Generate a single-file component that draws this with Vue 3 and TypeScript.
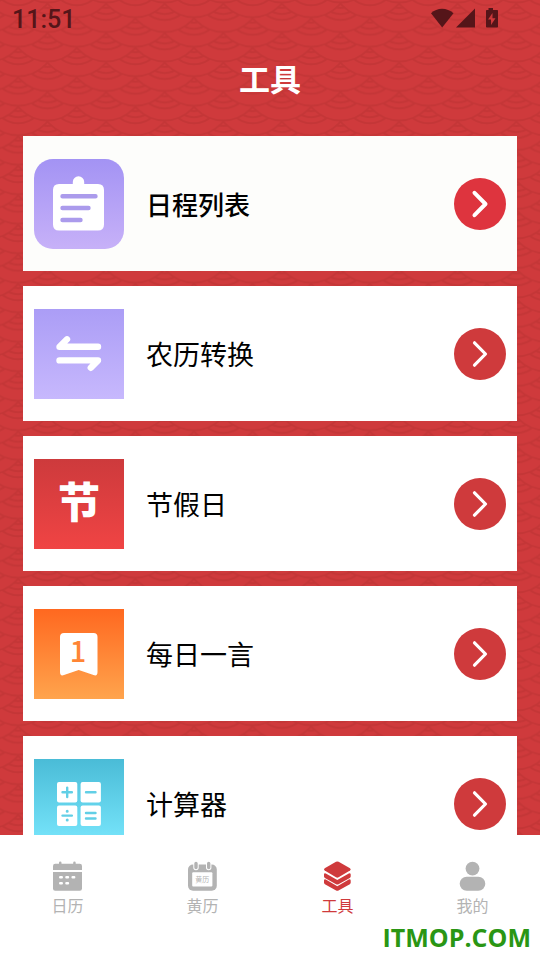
<script setup lang="ts">
type ToolKind = 'schedule' | 'convert' | 'holiday' | 'quote' | 'calculator'
type TabKind = 'calendar' | 'almanac' | 'tools' | 'mine'

interface Tool {
  kind: ToolKind
  label: string
}

interface Tab {
  kind: TabKind
  label: string
}

const tools: Tool[] = [
  { kind: 'schedule', label: '日程列表' },
  { kind: 'convert', label: '农历转换' },
  { kind: 'holiday', label: '节假日' },
  { kind: 'quote', label: '每日一言' },
  { kind: 'calculator', label: '计算器' },
]

const tabs: Tab[] = [
  { kind: 'calendar', label: '日历' },
  { kind: 'almanac', label: '黄历' },
  { kind: 'tools', label: '工具' },
  { kind: 'mine', label: '我的' },
]

const activeTab: TabKind = 'tools'

// Concentric arcs of one scale; rows are painted bottom to top so upper scales overlap lower ones.
const radii = [38, 26, 20, 14]
const even = [0, 58.6]
const odd = [-29.3, 29.3, 87.9]
const rows = [
  { y: 34.25, xs: even },
  { y: 19.5, xs: odd },
  { y: 4.75, xs: even },
  { y: -10, xs: odd },
  { y: -24.75, xs: even },
]
const scales = rows.flatMap(({ y, xs }) => xs.map((x) => ({ x, y })))
</script>

<template>
  <div class="screen">
    <svg class="waves" aria-hidden="true">
      <defs>
        <pattern id="waves" width="58.6" height="29.5" patternUnits="userSpaceOnUse" patternTransform="translate(18.2 4)">
          <g v-for="(s, i) in scales" :key="i" fill="#cf3a3c" stroke="#c43637" stroke-width="1.9">
            <circle v-for="r in radii" :key="r" :cx="s.x" :cy="s.y" :r="r" />
          </g>
        </pattern>
      </defs>
      <rect width="100%" height="100%" fill="url(#waves)" />
    </svg>

    <div class="status">
      <span class="clock">11:51</span>
      <svg class="signals" viewBox="0 0 68 20" aria-hidden="true">
        <path d="M1 5.200C7-.9 17-.9 23.500 5.200L12.200 19.500z" />
        <path d="M45 .500v19h-19z" />
        <path
          fill-rule="evenodd"
          d="M58.500 0h4.500v2h4.200q.8 0 .8.800v16q0 .700-.8.700h-10.400q-.8 0-.8-.7v-16q0-.8.800-.8h1.700zM62.500 5l-4.500 6.500h3v5.500l4.500-6.700h-3z"
        />
      </svg>
    </div>

    <header class="header">
      <h1>工具</h1>
    </header>

    <main class="list">
      <button v-for="tool in tools" :key="tool.kind" type="button" class="card" :class="tool.kind">
        <span class="tile">
          <svg viewBox="0 0 90 90" aria-hidden="true">
            <g v-if="tool.kind === 'schedule'">
              <path fill="#fff" d="M25 25h13.800v-2a5.700 5.700 0 0 1 11.400 0v2h13.800q6 0 6 6v34.500q0 6-6 6h-39q-6 0-6-6v-34.500q0-6 6-6z" />
              <path stroke="#ab9bec" stroke-width="4.400" stroke-linecap="round" d="M28.500 37.300h33M28.500 49h26M28.500 61h18" />
            </g>
            <g v-else-if="tool.kind === 'convert'" fill="none" stroke="#fff" stroke-width="6.400" stroke-linecap="round" stroke-linejoin="round">
              <path d="M64 37.700H25.500L33 30.300" />
              <path d="M25.500 51.400H64L56.800 58.800" />
            </g>
            <text v-else-if="tool.kind === 'holiday'" class="glyph" x="45" y="59" text-anchor="middle">节</text>
            <g v-else-if="tool.kind === 'quote'">
              <path fill="#fff" d="M30 24h29.500q4 0 4 4v35q0 4.500-4 3l-14.800-5-14.700 5q-4 1.500-4-3v-35q0-4 4-4z" />
              <text class="numeral" x="44" y="53" text-anchor="middle">1</text>
            </g>
            <g v-else>
              <g fill="#fff">
                <rect x="23" y="23" width="20.300" height="20.500" rx="2" />
                <rect x="46.600" y="23" width="20.300" height="20.500" rx="2" />
                <rect x="23" y="46.500" width="20.300" height="20.500" rx="2" />
                <rect x="46.600" y="46.500" width="20.300" height="20.500" rx="2" />
              </g>
              <g stroke="#62cfe6" stroke-width="2.400" stroke-linecap="round">
                <path d="M28.500 33.300h9.400M33.200 28.600v9.400M52 33.300h9.500" />
                <path d="M28.500 56.600h9.400M52 54h9.500M52 59.500h9.500" />
                <path stroke-width="3" d="M33.200 52.200v.1M33.200 61v.1" />
              </g>
            </g>
          </svg>
        </span>
        <span class="label">{{ tool.label }}</span>
        <svg class="go" viewBox="0 0 52 52" aria-hidden="true">
          <circle cx="26" cy="26" r="26" />
          <path d="M20.500 14.800L31.500 26 20.500 37.200" />
        </svg>
      </button>
    </main>

    <nav class="tabs">
      <a v-for="tab in tabs" :key="tab.kind" :href="'#' + tab.kind" class="tab" :class="{ active: tab.kind === activeTab }">
        <svg viewBox="0 0 31 31" aria-hidden="true">
          <g v-if="tab.kind === 'calendar'">
            <path d="M1 9V5q0-2.200 2.200-2.200H7V1.800a1.200 1.200 0 0 1 2.500 0v1h11.700v-1a1.200 1.200 0 0 1 2.500 0v1h4.100Q30 2.800 30 5v4z" />
            <path d="M1 11h29v16.500q0 2.200-2.200 2.200H3.200Q1 29.700 1 27.500z" />
            <path stroke="#fff" stroke-width="2.400" stroke-linecap="round" d="M8.200 16.200h1.600M14.400 16.200H16M20.600 16.200h1.600M8.200 22.300h1.600M14.400 22.300H16" />
          </g>
          <g v-else-if="tab.kind === 'almanac'">
            <rect x="1" y="3.600" width="28.800" height="26.200" rx="5" />
            <rect x="5.200" y="11.200" width="20.200" height="14.200" rx="1" fill="#fff" />
            <path stroke="#fff" stroke-width="5.400" stroke-linecap="round" d="M9 3v3.500M21.700 3v3.500" />
            <path stroke="#b3b3b3" stroke-width="3.400" stroke-linecap="round" d="M9 2.500v4M21.700 2.500v4" />
            <text class="tiny" x="15.300" y="21" text-anchor="middle">黄历</text>
          </g>
          <g v-else-if="tab.kind === 'tools'">
            <path d="M14 .8q1.300-.6 2.600 0L28 7.200q1.500 1.100 0 2.400L16.600 16.300q-1.300.7-2.600 0L2.700 9.600q-1.500-1.300 0-2.400z" />
            <path d="M2 13.300q.2-1.700 1.800-.9L15.300 19l11.500-6.600q1.600-.8 1.900.9v2.300q-.1.900-.9 1.400L16.500 23.300q-1.200.6-2.400 0L2.900 17q-.8-.5-.9-1.400z" />
            <path d="M2 19.500q.2-1.700 1.800-.9L15.300 25.200l11.500-6.600q1.600-.8 1.900.9v2.300q-.1.900-.9 1.400L16.500 29.500q-1.200.6-2.400 0L2.900 23.200q-.8-.5-.9-1.400z" />
          </g>
          <g v-else>
            <circle cx="15.500" cy="7.600" r="6.900" />
            <rect x="2.700" y="15.800" width="25.600" height="14" rx="7" />
          </g>
        </svg>
        <span>{{ tab.label }}</span>
      </a>
    </nav>

    <div class="watermark">ITMOP.COM</div>
  </div>
</template>

<style>
body {
  margin: 0;
  background: #cf3a3c;
}
</style>

<style scoped>
.screen {
  position: relative;
  display: flex;
  flex-direction: column;
  height: 100vh;
  overflow: hidden;
  background: #cf3a3c;
  font-family: "Noto Sans CJK SC", sans-serif;
}

.waves {
  position: absolute;
  inset: 0;
  width: 100%;
  height: 100%;
}

.status,
.header,
.list,
.tabs {
  position: relative;
}

.status {
  flex: none;
  display: flex;
  align-items: center;
  justify-content: space-between;
  height: 36px;
  padding: 0 42px 0 12px;
  color: #551519;
}

.clock {
  padding-top: 4px;
  font: 500 25px/32px Roboto, sans-serif;
}

.signals {
  width: 68px;
  height: 20px;
  fill: #551519;
}

.header {
  flex: none;
  display: flex;
  align-items: center;
  justify-content: center;
  height: 84px;
}

h1 {
  margin: 0;
  color: #fff;
  font-size: 31px;
  line-height: 44px;
  font-weight: 700;
}

.list {
  flex: 1;
  min-height: 0;
  display: flex;
  flex-direction: column;
  gap: 15px;
  padding: 16px 23px 0;
  overflow-y: auto;
  scrollbar-width: none;
}

.card {
  flex: none;
  display: flex;
  align-items: center;
  height: 135px;
  padding: 0 11px;
  border: 0;
  background: #fff;
  color: #000;
  font: 400 27px/40px "Noto Sans CJK SC", sans-serif;
  text-align: left;
  cursor: pointer;
}

.tile {
  flex: none;
  width: 90px;
  height: 90px;
}

.tile svg {
  display: block;
  width: 100%;
  height: 100%;
  fill: none;
}

.label {
  flex: 1;
  padding-left: 22px;
}

.go {
  flex: none;
  width: 52px;
  height: 52px;
}

.go circle {
  fill: #cf3a3c;
}

.go path {
  fill: none;
  stroke: #fff;
  stroke-width: 3.2;
  stroke-linecap: round;
  stroke-linejoin: round;
}

.schedule {
  background: #fdfdfb;
  font-weight: 500;
  font-size: 26px;
}

.schedule .tile {
  border-radius: 19px;
  background: linear-gradient(#a393f4, #c7b1f8);
}

.schedule .go circle {
  fill: #de343e;
}

.schedule .go path {
  stroke-width: 4;
}

.convert .tile {
  background: linear-gradient(#ab9df6, #c7b8fd);
}

.holiday .tile {
  background: linear-gradient(#cd3a3c, #f04444);
}

.quote .tile {
  background: linear-gradient(#ff6820, #ffa44d);
}

.calculator .tile {
  background: linear-gradient(#4abcd7, #7be8fe);
}

.glyph {
  fill: #fff;
  font-size: 42px;
  font-weight: 900;
}

.numeral {
  fill: #ff8535;
  font-size: 29px;
  font-weight: 500;
}

.tabs {
  flex: none;
  display: grid;
  grid-template-columns: repeat(4, 1fr);
  height: 99px;
  padding-top: 26px;
  background: #fff;
}

.tab {
  display: flex;
  flex-direction: column;
  align-items: center;
  color: #b3b3b3;
  font-size: 16px;
  line-height: 26px;
  font-weight: 400;
  text-decoration: none;
}

.tab svg {
  width: 31px;
  height: 31px;
  fill: currentColor;
}

.tab.active {
  color: #cf3a3c;
}

.tiny {
  font-size: 7px;
}

.watermark {
  position: absolute;
  right: 9px;
  bottom: 5px;
  color: #2a9614;
  font: 700 25px/36px "Open Sans", sans-serif;
}
</style>
